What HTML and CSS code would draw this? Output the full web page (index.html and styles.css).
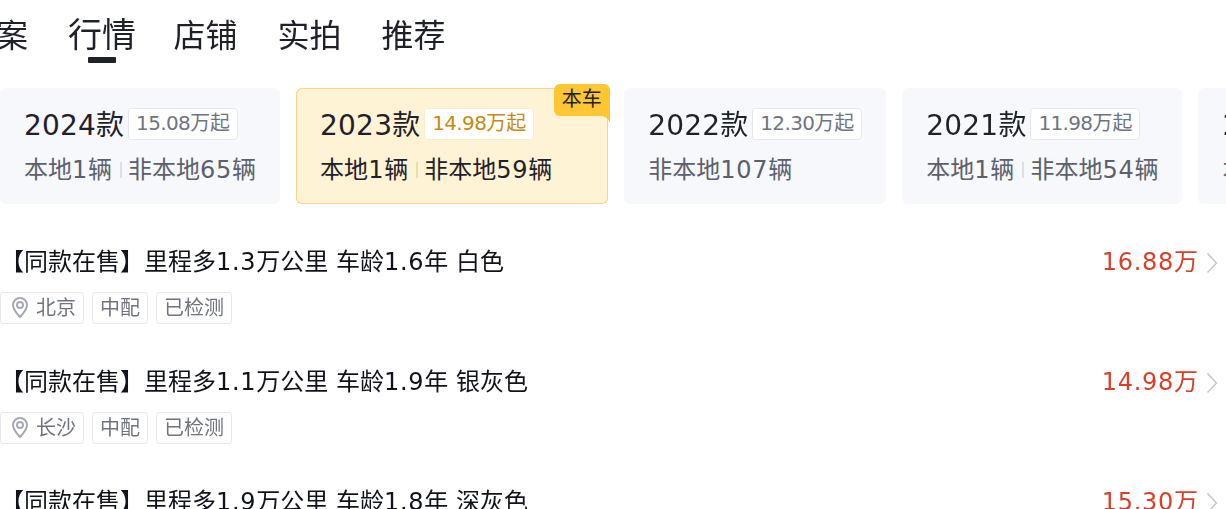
FILE: index.html
```html
<!DOCTYPE html>
<html lang="zh">
<head>
<meta charset="utf-8">
<title>行情</title>
<link rel="stylesheet" href="styles.css">
</head>
<body>
<div class="page">
  <nav class="tabs">
    <span class="tab">案</span>
    <span class="tab active">行情</span>
    <span class="tab">店铺</span>
    <span class="tab">实拍</span>
    <span class="tab">推荐</span>
  </nav>
  <div class="cards">
    <div class="card">
      <div class="card-head"><span class="year"><span class="n">2024</span>款</span><span class="from"><span class="n">15.08</span>万起</span></div>
      <div class="card-sub"><span>本地<span class="n">1</span>辆</span><i class="sep"></i><span>非本地<span class="n">65</span>辆</span></div>
    </div>
    <div class="card current">
      <span class="badge">本车</span>
      <div class="card-head"><span class="year"><span class="n">2023</span>款</span><span class="from"><span class="n">14.98</span>万起</span></div>
      <div class="card-sub"><span>本地<span class="n">1</span>辆</span><i class="sep"></i><span>非本地<span class="n">59</span>辆</span></div>
    </div>
    <div class="card">
      <div class="card-head"><span class="year"><span class="n">2022</span>款</span><span class="from"><span class="n">12.30</span>万起</span></div>
      <div class="card-sub"><span>非本地<span class="n">107</span>辆</span></div>
    </div>
    <div class="card">
      <div class="card-head"><span class="year"><span class="n">2021</span>款</span><span class="from"><span class="n">11.98</span>万起</span></div>
      <div class="card-sub"><span>本地<span class="n">1</span>辆</span><i class="sep"></i><span>非本地<span class="n">54</span>辆</span></div>
    </div>
    <div class="card">
      <div class="card-head"><span class="year"><span class="n">2020</span>款</span><span class="from"><span class="n">10.98</span>万起</span></div>
      <div class="card-sub"><span>本地<span class="n">1</span>辆</span><i class="sep"></i><span>非本地<span class="n">40</span>辆</span></div>
    </div>
  </div>
  <div class="list">
    <div class="item">
      <div class="item-main">
        <div class="item-title">【同款在售】里程多<span class="n">1.3</span>万公里 车龄<span class="n">1.6</span>年 白色</div>
        <div class="tags">
          <span class="tag"><svg class="pin" viewBox="0 0 20 22"><path d="M10 20.500C7.500 17.500 3 13.500 3 8.500a7 7 0 0 1 14 0c0 5-4.500 9-7 12z"/><circle cx="10" cy="8.500" r="3"/></svg><span class="tag-text">北京</span></span>
          <span class="tag"><span class="tag-text">中配</span></span>
          <span class="tag"><span class="tag-text">已检测</span></span>
        </div>
      </div>
      <span class="price"><span class="n">16.88</span>万</span>
      <svg class="chev" viewBox="0 0 12 22"><path d="M1.500 1.500 10.500 11l-9 9.500"/></svg>
    </div>
    <div class="item">
      <div class="item-main">
        <div class="item-title">【同款在售】里程多<span class="n">1.1</span>万公里 车龄<span class="n">1.9</span>年 银灰色</div>
        <div class="tags">
          <span class="tag"><svg class="pin" viewBox="0 0 20 22"><path d="M10 20.500C7.500 17.500 3 13.500 3 8.500a7 7 0 0 1 14 0c0 5-4.500 9-7 12z"/><circle cx="10" cy="8.500" r="3"/></svg><span class="tag-text">长沙</span></span>
          <span class="tag"><span class="tag-text">中配</span></span>
          <span class="tag"><span class="tag-text">已检测</span></span>
        </div>
      </div>
      <span class="price"><span class="n">14.98</span>万</span>
      <svg class="chev" viewBox="0 0 12 22"><path d="M1.500 1.500 10.500 11l-9 9.500"/></svg>
    </div>
    <div class="item">
      <div class="item-main">
        <div class="item-title">【同款在售】里程多<span class="n">1.9</span>万公里 车龄<span class="n">1.8</span>年 深灰色</div>
      </div>
      <span class="price"><span class="n">15.30</span>万</span>
      <svg class="chev" viewBox="0 0 12 22"><path d="M1.500 1.500 10.500 11l-9 9.500"/></svg>
    </div>
  </div>
</div>
</body>
</html>
```
FILE: styles.css
```css
* { box-sizing: border-box; }
html, body { margin: 0; padding: 0; background: #fff; overflow: hidden; }
body { width: 1226px; height: 509px; font-family: "DejaVu Sans", "Noto Sans CJK SC", sans-serif; color: #1f2129; }

/* The page is a 613px-wide mobile layout shown at 2x. */
.page { width: 613px; height: 255px; overflow: hidden; transform: scale(2); transform-origin: 0 0; filter: blur(0.25px); }

/* Digit runs: the reference has whole-pixel digit advances at each text size. */
.n { letter-spacing: 0.35px; }
.year .n { letter-spacing: 0.1px; }
.from .n { letter-spacing: -0.32px; }

.tabs { display: flex; align-items: center; gap: 20px; height: 32px; margin-left: -2px; margin-top: 2px; }
.tab { position: relative; font-size: 16px; line-height: 31px; color: #1f2129; white-space: nowrap; transform: translateY(-0.5px); }
.tab.active { font-size: 17px; margin-right: -1.25px; }
.tab.active::after { content: ""; position: absolute; left: 10px; bottom: 2px; width: 14px; height: 2.5px; border-radius: 0.5px; background: #1f2129; }

.cards { display: flex; gap: 8px; margin-top: 10px; height: 58px; }
.card { position: relative; flex: none; height: 58px; padding: 9px 12px 0; border-radius: 3px; background: #f6f8fc; }
.card.current { padding-right: 28px; background: #fff3d6; box-shadow: inset 0 0 0 0.5px #f5d78a; }
.card-head { display: flex; align-items: center; gap: 2px; height: 18px; }
.year { font-size: 14px; line-height: 18px; color: #1f2129; white-space: nowrap; transform: translateY(0.5px); }
.from { height: 16px; padding: 0 4px; font-size: 10px; line-height: 15.5px; color: #70747f; background: #fff; box-shadow: inset 0 0 0 0.5px #e6e8ee; border-radius: 2px; white-space: nowrap; }
.current .from { color: #c98a10; box-shadow: inset 0 0 0 0.5px #fbeccb; }
.card-sub { display: flex; align-items: center; margin-top: 6px; font-size: 12px; line-height: 16px; color: #5c606b; white-space: nowrap; }
.current .card-sub { color: #1f2129; }
.sep { width: 0.5px; height: 8px; margin: 0 3.75px; background: #dcdfe6; }
.current .sep { background: #ecdcb4; }
.badge { position: absolute; top: -2px; right: -0.5px; width: 27.5px; height: 16px; font-size: 10px; line-height: 16.5px; text-align: center; color: #1f2129; background: #ffc633; border-radius: 3px 3px 0 3px; }
.badge::after { content: ""; position: absolute; top: 100%; right: 0; width: 2.5px; height: 2.5px; background: radial-gradient(circle at 0 100%, transparent 2.3px, #ffc633 2.6px); }

.list { margin-top: 16px; }
.item { display: flex; align-items: flex-start; height: 60px; }
.item-main { flex: 1; min-width: 0; }
.item-title { font-size: 12px; line-height: 26px; color: #11131a; white-space: pre; }
.tags { display: flex; gap: 4px; margin-top: 2px; }
.tag { display: flex; align-items: center; height: 16px; padding: 0 4px; font-size: 10px; line-height: 15px; color: #70747f; box-shadow: inset 0 0 0 0.5px #e6e8ee; border-radius: 2px; white-space: nowrap; }
.tag-text { transform: translateY(-0.5px); }
.pin { width: 10px; height: 11px; margin: 0 3px 0 1px; fill: none; stroke: #a6aab4; stroke-width: 2; transform: translateY(-0.75px); }
.price { font-size: 12px; line-height: 26px; color: #d9402a; white-space: nowrap; }
.chev { flex: none; width: 6px; height: 11px; margin: 7.5px 4px 0 4px; fill: none; stroke: #c4c7ce; stroke-width: 1.500; }
```
